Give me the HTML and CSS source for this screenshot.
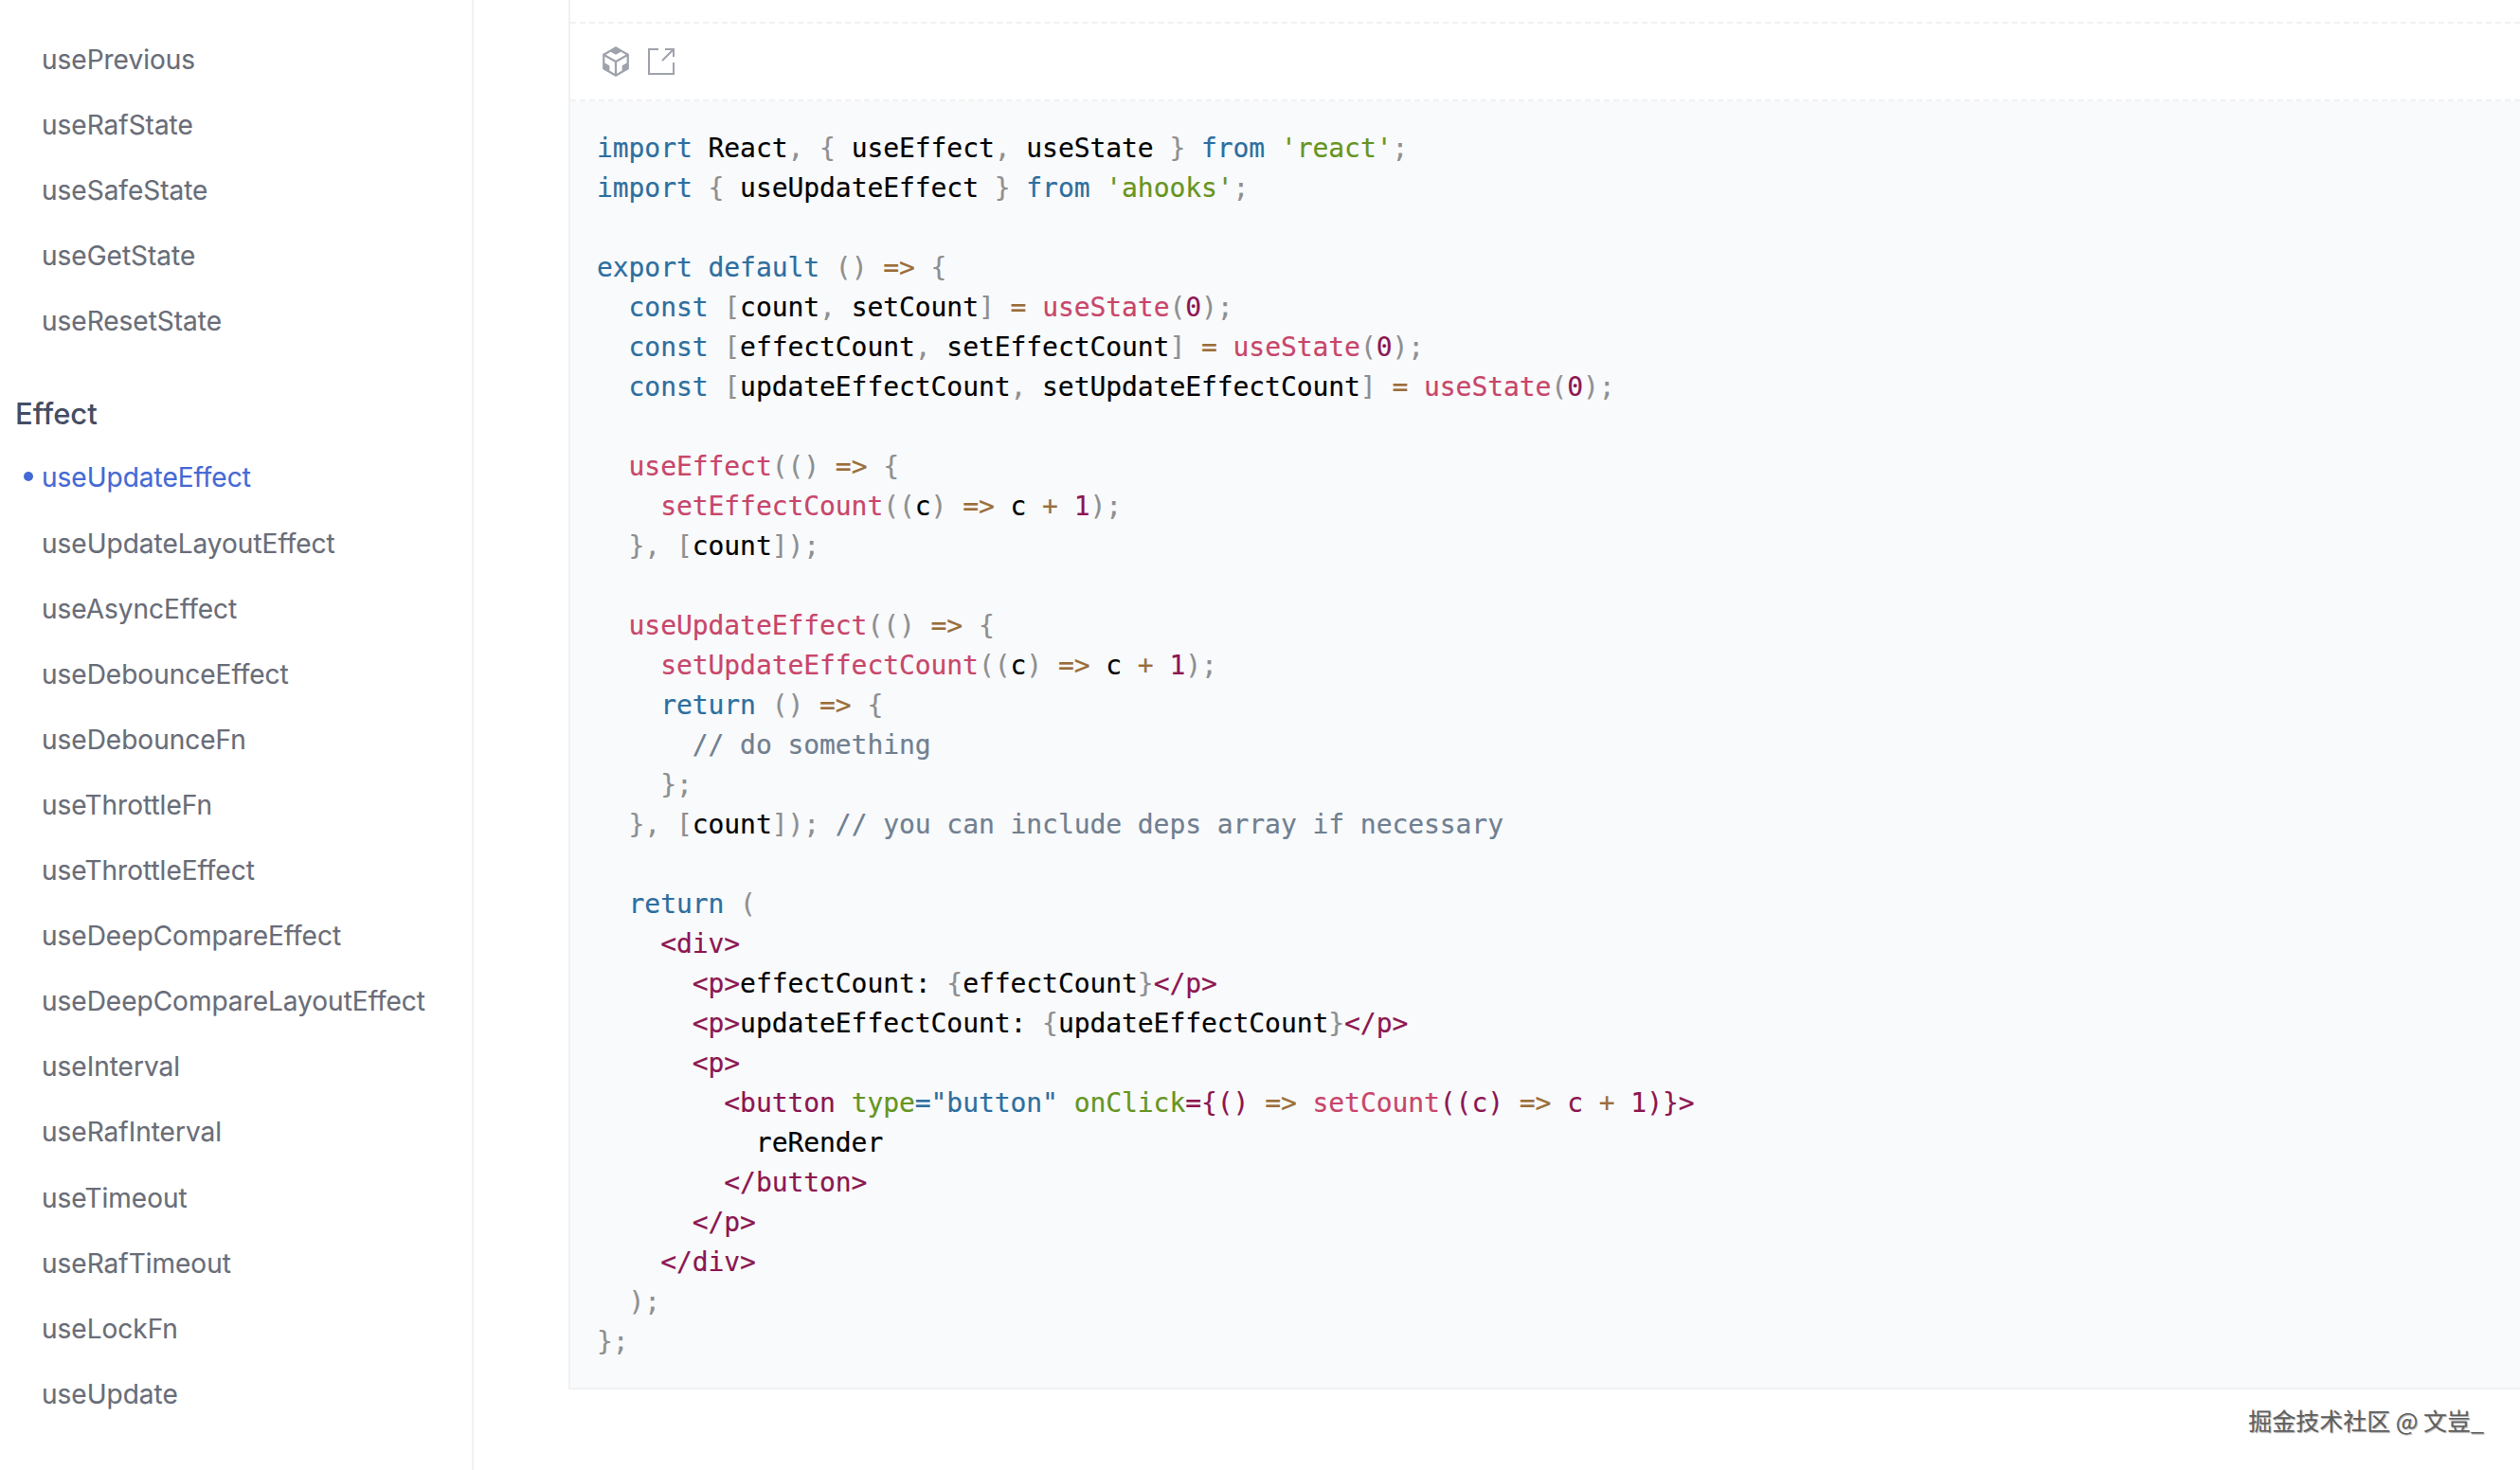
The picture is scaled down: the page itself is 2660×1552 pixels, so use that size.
FILE: index.html
```html
<!DOCTYPE html>
<html lang="zh">
<head>
<meta charset="utf-8">
<title>useUpdateEffect</title>
<link rel="stylesheet" href="styles.css">
</head>
<body>
<div class="layout">
<nav class="sidebar">
<ul class="menu">
<li>usePrevious</li>
<li>useRafState</li>
<li>useSafeState</li>
<li>useGetState</li>
<li>useResetState</li>
</ul>
<h2 class="group">Effect</h2>
<ul class="menu">
<li class="active">useUpdateEffect</li>
<li>useUpdateLayoutEffect</li>
<li>useAsyncEffect</li>
<li>useDebounceEffect</li>
<li>useDebounceFn</li>
<li>useThrottleFn</li>
<li>useThrottleEffect</li>
<li>useDeepCompareEffect</li>
<li>useDeepCompareLayoutEffect</li>
<li>useInterval</li>
<li>useRafInterval</li>
<li>useTimeout</li>
<li>useRafTimeout</li>
<li>useLockFn</li>
<li>useUpdate</li>
</ul>
</nav>
<main class="content">
<section class="demo">
<div class="preview"></div>
<div class="actions">
<svg class="icon" viewBox="151 96 722 832" width="28" height="32"><path fill="#9ea2ab" d="M709.6 210l.4-.2h.2L512 96 313.900 209.800h-.2l.7.3L151.500 304v416L512 928l360.500-208V304l-162.900-94zM482.700 843.600L339.600 761V621.400L210 547.800V372.900l272.700 157.300v313.400zM238.200 321.500l134.700-77.800 138.900 79.700 139.100-79.900 135.200 78-273.900 158-274-158zM814 548.300l-128.800 73.100v139.100l-143.900 83V530.400L814 373.100v175.200z"/></svg>
<svg class="icon" viewBox="0 0 28 28" width="28" height="28"><path d="M11 1H1V27H27V15" fill="none" stroke="#9ea2ab" stroke-width="2"/><path d="M15 13 26.500 1.500M18 1H27V9" fill="none" stroke="#9ea2ab" stroke-width="2"/></svg>
</div>
<pre class="code"><code><span class="k">import</span> React<span class="p">,</span> <span class="p">{</span> useEffect<span class="p">,</span> useState <span class="p">}</span> <span class="k">from</span> <span class="s">'react'</span><span class="p">;</span>
<span class="k">import</span> <span class="p">{</span> useUpdateEffect <span class="p">}</span> <span class="k">from</span> <span class="s">'ahooks'</span><span class="p">;</span>

<span class="k">export</span> <span class="k">default</span> <span class="p">()</span> <span class="o">=&gt;</span> <span class="p">{</span>
  <span class="k">const</span> <span class="p">[</span>count<span class="p">,</span> setCount<span class="p">]</span> <span class="o">=</span> <span class="f">useState</span><span class="p">(</span><span class="n">0</span><span class="p">);</span>
  <span class="k">const</span> <span class="p">[</span>effectCount<span class="p">,</span> setEffectCount<span class="p">]</span> <span class="o">=</span> <span class="f">useState</span><span class="p">(</span><span class="n">0</span><span class="p">);</span>
  <span class="k">const</span> <span class="p">[</span>updateEffectCount<span class="p">,</span> setUpdateEffectCount<span class="p">]</span> <span class="o">=</span> <span class="f">useState</span><span class="p">(</span><span class="n">0</span><span class="p">);</span>

  <span class="f">useEffect</span><span class="p">(()</span> <span class="o">=&gt;</span> <span class="p">{</span>
    <span class="f">setEffectCount</span><span class="p">((</span>c<span class="p">)</span> <span class="o">=&gt;</span> c <span class="o">+</span> <span class="n">1</span><span class="p">);</span>
  <span class="p">},</span> <span class="p">[</span>count<span class="p">]);</span>

  <span class="f">useUpdateEffect</span><span class="p">(()</span> <span class="o">=&gt;</span> <span class="p">{</span>
    <span class="f">setUpdateEffectCount</span><span class="p">((</span>c<span class="p">)</span> <span class="o">=&gt;</span> c <span class="o">+</span> <span class="n">1</span><span class="p">);</span>
    <span class="k">return</span> <span class="p">()</span> <span class="o">=&gt;</span> <span class="p">{</span>
      <span class="c">// do something</span>
    <span class="p">};</span>
  <span class="p">},</span> <span class="p">[</span>count<span class="p">]);</span> <span class="c">// you can include deps array if necessary</span>

  <span class="k">return</span> <span class="p">(</span>
    <span class="t">&lt;div&gt;</span>
      <span class="t">&lt;p&gt;</span>effectCount: <span class="p">{</span>effectCount<span class="p">}</span><span class="t">&lt;/p&gt;</span>
      <span class="t">&lt;p&gt;</span>updateEffectCount: <span class="p">{</span>updateEffectCount<span class="p">}</span><span class="t">&lt;/p&gt;</span>
      <span class="t">&lt;p&gt;</span>
        <span class="t">&lt;button</span> <span class="a">type</span><span class="v">="button"</span> <span class="a">onClick</span><span class="t">={()</span> <span class="o">=&gt;</span> <span class="f">setCount</span><span class="t">((c)</span> <span class="o">=&gt;</span> <span class="t">c</span> <span class="o">+</span> <span class="t">1)}&gt;</span>
          reRender
        <span class="t">&lt;/button&gt;</span>
      <span class="t">&lt;/p&gt;</span>
    <span class="t">&lt;/div&gt;</span>
  <span class="p">);</span>
<span class="p">};</span></code></pre>
</section>
<footer class="watermark">掘金技术社区 @ 文豈_</footer>
</main>
</div>
</body>
</html>
```
FILE: styles.css
```css
* { box-sizing: border-box; }
html, body { margin: 0; height: 100%; background: #fff; overflow: hidden; }
.layout { display: flex; height: 1552px; font-family: Inter, "Noto Sans", sans-serif; }
.sidebar { width: 500px; flex: none; border-right: 2px solid #f0f1f3; padding: 29px 0 0 16px; }
.menu { list-style: none; margin: 0; padding: 0 0 0 28px; }
.menu li { position: relative; height: 69.1px; line-height: 69.1px; font-size: 28px; color: #696d78; white-space: nowrap; -webkit-text-stroke: 0.15px; }
.menu li.active { color: #4569d4; }
.menu li.active::before { content: ""; position: absolute; left: -19px; top: 28px; width: 10px; height: 10px; border-radius: 50%; background: #4569d4; }
.group { margin: 0; height: 96px; padding-top: 38px; font-size: 31px; line-height: 50px; font-weight: 500; color: #454d63; }
.content { flex: 1; min-width: 0; padding-left: 100px; position: relative; }
.demo { height: 1467px; border-left: 2px solid #f0f1f3; border-bottom: 2px solid #f0f1f3; background: #f9fafc; }
.preview { height: 25px; background: #fff; border-bottom: 2px dashed #f0f1f3; }
.actions { height: 82px; display: flex; align-items: center; gap: 20px; padding-left: 34px; background: #fff; border-bottom: 2px dashed #f0f1f3; }
.icon { display: block; flex: none; }
.code { margin: 0; padding: 29px 28px; font: 28px/42px "DejaVu Sans Mono", monospace; letter-spacing: -0.07px; color: #000; background: transparent; white-space: pre; -webkit-text-stroke: 0.2px; }
.code code { font: inherit; letter-spacing: inherit; }
.k, .v { color: #2d6f9f; }
.f { color: #c8466a; }
.t, .n { color: #8c1650; }
.a, .s { color: #669522; }
.p { color: #8f8f8f; }
.o { color: #9a6e3a; }
.c { color: #708090; }
.watermark { position: absolute; right: 38px; top: 1483px; font: 25px/32px "Noto Sans CJK SC", sans-serif; color: #5f5f5f; text-shadow: 1px 1px 1px #aaa; white-space: nowrap; }
```
